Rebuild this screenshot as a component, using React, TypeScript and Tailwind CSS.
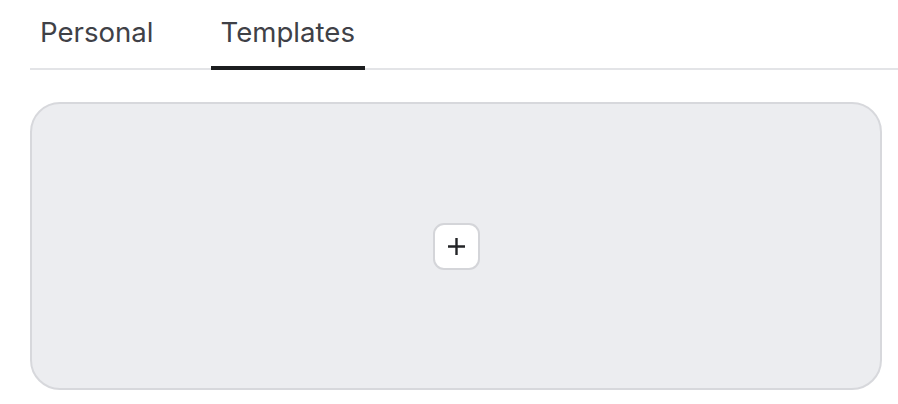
import { useState } from 'react';

const tabs = ['Personal', 'Templates'];

export default function App() {
    const [active, setActive] = useState('Templates');

    return (
        <div className="w-[898px] h-[404px] bg-white" style={{ fontFamily: 'Inter, "Noto Sans", sans-serif' }}>
            {/* Tab bar */}
            <div className="ml-[30px] flex gap-[47px] border-b-2 border-[#e3e4e7] h-[70px]">
                {tabs.map((tab) => (
                    <button
                        key={tab}
                        onClick={() => setActive(tab)}
                        className={`relative flex items-start px-[10px] pt-[14px] text-[27.6px] leading-[36px] text-[#3f4147] ${
                            active === tab ? 'after:absolute after:left-0 after:right-0 after:-bottom-[2px] after:h-[4px] after:bg-[#1c1d1f]' : ''
                        }`}
                    >
                        {tab}
                    </button>
                ))}
            </div>

            {/* Empty template card */}
            <div className="mt-[32px] ml-[30px] w-[852px] h-[288px] rounded-[30px] border-2 border-[#d7d8dc] bg-[#ecedf0] flex items-center justify-center">
                <button className="w-[47px] h-[47px] rounded-[11px] border-2 border-[#d4d5d9] bg-white flex items-center justify-center">
                    <svg width="19" height="19" viewBox="0 0 19 19" fill="none">
                        <path d="M9.5 1v17M1 9.5h17" stroke="#232427" strokeWidth="2.4" />
                    </svg>
                </button>
            </div>
        </div>
    );
}
